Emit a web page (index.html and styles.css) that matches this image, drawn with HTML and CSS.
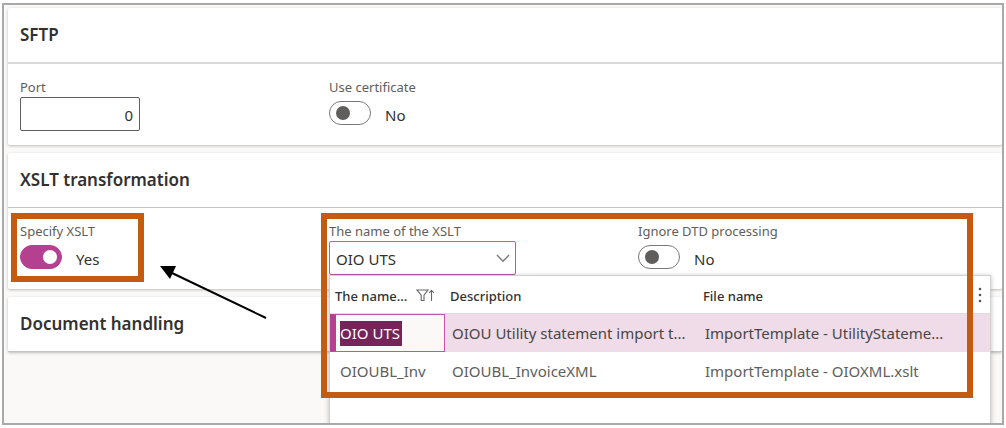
FILE: index.html
```html
<!DOCTYPE html>
<html lang="en">
<head>
<meta charset="utf-8">
<title>XSLT transformation</title>
<meta name="viewport" content="width=device-width, initial-scale=1">
<link rel="stylesheet" href="styles.css">
</head>
<body>
<main class="frame">
  <section class="card">
    <h2 class="card-title card-title-soft">SFTP</h2>
    <div class="fields">
      <div class="field">
        <label class="label" for="port">Port</label>
        <input class="box box-number" id="port" type="text" value="0">
      </div>
      <div class="field">
        <label class="label" for="cert">Use certificate</label>
        <div class="switch-row"><input class="switch" id="cert" type="checkbox" role="switch"><span>No</span></div>
      </div>
    </div>
  </section>

  <section class="card">
    <h2 class="card-title">XSLT transformation</h2>
    <div class="fields">
      <div class="field">
        <label class="label" for="specify">Specify XSLT</label>
        <div class="switch-row"><input class="switch" id="specify" type="checkbox" role="switch" checked><span>Yes</span></div>
      </div>
      <div class="field">
        <label class="label" for="xslt">The name of the XSLT</label>
        <div class="combo">
          <input class="box box-combo" id="xslt" type="text" role="combobox" aria-expanded="true" aria-controls="lookup" value="OIO UTS">
          <button class="combo-button" type="button" aria-label="Open lookup">
            <svg width="14" height="9" viewBox="0 0 14 9" fill="none" stroke="#777" stroke-width="1.3"><path d="M1 1l6 6.3L13 1"/></svg>
          </button>
          <div class="lookup" id="lookup">
            <table class="grid">
              <colgroup><col class="col-name"><col class="col-desc"><col class="col-file"><col class="col-more"></colgroup>
              <thead>
                <tr>
                  <th><div class="sorted">The name...
                    <svg width="19" height="13" viewBox="0 0 19 13" fill="none" stroke="#666" stroke-width="1.1"><path d="M1 1h11L8 6.200v5.300H5.200V6.200zM15.500 12V1.500M13 4l2.500-2.700L18 4"/></svg>
                  </div></th>
                  <th>Description</th>
                  <th>File name</th>
                  <th><button class="more" type="button" aria-label="More options">
                    <svg width="4" height="16" viewBox="0 0 4 16" fill="#555"><circle cx="2" cy="2" r="1.300"/><circle cx="2" cy="8" r="1.300"/><circle cx="2" cy="14" r="1.300"/></svg>
                  </button></th>
                </tr>
              </thead>
              <tbody>
                <tr class="selected">
                  <td class="editing"><input class="cell-input" type="text" aria-label="The name of the XSLT" value="OIO UTS"></td>
                  <td>OIOU Utility statement import t...</td>
                  <td>ImportTemplate - UtilityStateme...</td>
                  <td></td>
                </tr>
                <tr>
                  <td>OIOUBL_Inv</td>
                  <td>OIOUBL_InvoiceXML</td>
                  <td>ImportTemplate - OIOXML.xslt</td>
                  <td></td>
                </tr>
              </tbody>
            </table>
          </div>
        </div>
      </div>
      <div class="field">
        <label class="label" for="dtd">Ignore DTD processing</label>
        <div class="switch-row"><input class="switch" id="dtd" type="checkbox" role="switch"><span>No</span></div>
      </div>
    </div>
  </section>

  <section class="card">
    <h2 class="card-title">Document handling</h2>
  </section>

  <div class="callout callout-specify"></div>
  <div class="callout callout-lookup"></div>
  <svg class="arrow" width="108" height="56" viewBox="0 0 108 56"><path d="M106 52L12 7" stroke="#000" stroke-width="2"/><path d="M0 0h16L10 13z"/></svg>
</main>
</body>
</html>
```

FILE: styles.css
```css
* { box-sizing: border-box; }

body {
  margin: 0;
  padding: 3px 2px;
  background: #fff;
  color: #323130;
  font-family: "Noto Sans", "Open Sans", sans-serif;
  font-size: 15px;
}

input, button { font: inherit; color: inherit; margin: 0; }

.frame {
  position: relative;
  display: flex;
  flex-direction: column;
  gap: 8px;
  min-height: calc(100vh - 6px);
  padding: 3px 0 0 4px;
  border: 2px solid #a9a9a9;
  background: #faf9f8;
  overflow: hidden;
}

.card {
  border-radius: 2px;
  background: #fff;
  box-shadow: 0 1px 3px rgba(0, 0, 0, 0.25);
}

.card-title {
  margin: 0;
  padding: 0 12px;
  border-bottom: 1px solid #c4c4c4;
  font-size: 17px;
  font-weight: 600;
  line-height: 54px;
  color: #323130;
}

.card-title-soft { border-bottom: 2px solid #dadada; }

.fields {
  display: grid;
  grid-template-columns: repeat(3, 309px);
  padding: 14px 12px;
}

.label {
  display: block;
  margin-bottom: 1px;
  font-size: 13px;
  line-height: 18px;
  color: #605e5c;
}

.box {
  display: block;
  height: 34px;
  padding: 2px 6px 0;
  border: 1px solid #605e5c;
  border-radius: 2px;
  background: #fff;
  outline: none;
}

.box-number { width: 120px; text-align: right; }

.box-combo {
  width: 100%;
  border: 1px solid #c355a2;
}

.switch-row {
  display: flex;
  gap: 14px;
  height: 34px;
  padding-top: 4px;
  line-height: 28px;
}

.switch {
  appearance: none;
  display: flex;
  align-items: center;
  width: 42px;
  height: 24px;
  padding: 0 6px;
  border: 1px solid #7a7877;
  border-radius: 12px;
  background: #fff;
}

.switch::before {
  content: "";
  width: 14px;
  height: 14px;
  border-radius: 50%;
  background: #605e5c;
}

.switch:checked {
  justify-content: flex-end;
  padding: 0 4px;
  border-color: #b4408f;
  background: #b4408f;
}

.switch:checked::before { background: #fff; }

.combo { position: relative; width: 187px; }

.combo-button {
  position: absolute;
  top: 0;
  right: 0;
  display: flex;
  align-items: center;
  justify-content: center;
  width: 27px;
  height: 34px;
  padding: 0;
  border: 0;
  background: none;
}

.lookup {
  position: absolute;
  z-index: 1;
  top: 100%;
  left: 0;
  width: 662px;
  height: 160px;
  border: 1px solid #d2d0ce;
  background: #fff;
  box-shadow: 0 1px 5px rgba(0, 0, 0, 0.25);
}

.grid {
  width: 100%;
  border-collapse: separate;
  border-spacing: 0;
  table-layout: fixed;
}

.col-name { width: 115px; }
.col-desc { width: 253px; }
.col-more { width: 20px; }

.grid th, .grid td {
  height: 38px;
  padding: 0 7px;
  text-align: left;
  white-space: nowrap;
}

.grid th {
  padding: 2px 5px 0;
  border-bottom: 1px solid #dcdcdc;
  font-size: 13px;
  font-weight: 500;
}

.grid td { color: #605e5c; }
.grid td:first-child { padding-left: 10px; }

.grid th:last-child { padding: 0; }

.sorted { display: flex; align-items: center; gap: 9px; }

.more {
  display: block;
  width: 20px;
  padding: 0 8px;
  border: 0;
  background: none;
}

.more svg { display: block; }

.grid .selected td { background: #f0dce9; color: #484644; }

.grid .selected .editing {
  padding-left: 4px;
  border: 1px solid #c355a2;
  border-left: 6px solid #b4408f;
  background: #faf9f8;
}

.cell-input {
  display: block;
  width: 62px;
  height: 25px;
  padding: 0;
  border: 0;
  background: #742459;
  color: #fff;
}

.callout {
  position: absolute;
  z-index: 2;
  border: 6px solid #c55a11;
  pointer-events: none;
}

.callout-specify { left: 7px; top: 208px; width: 133px; height: 69px; }
.callout-lookup { left: 317px; top: 208px; width: 652px; height: 185px; }

.arrow { position: absolute; left: 156px; top: 261px; }
```
